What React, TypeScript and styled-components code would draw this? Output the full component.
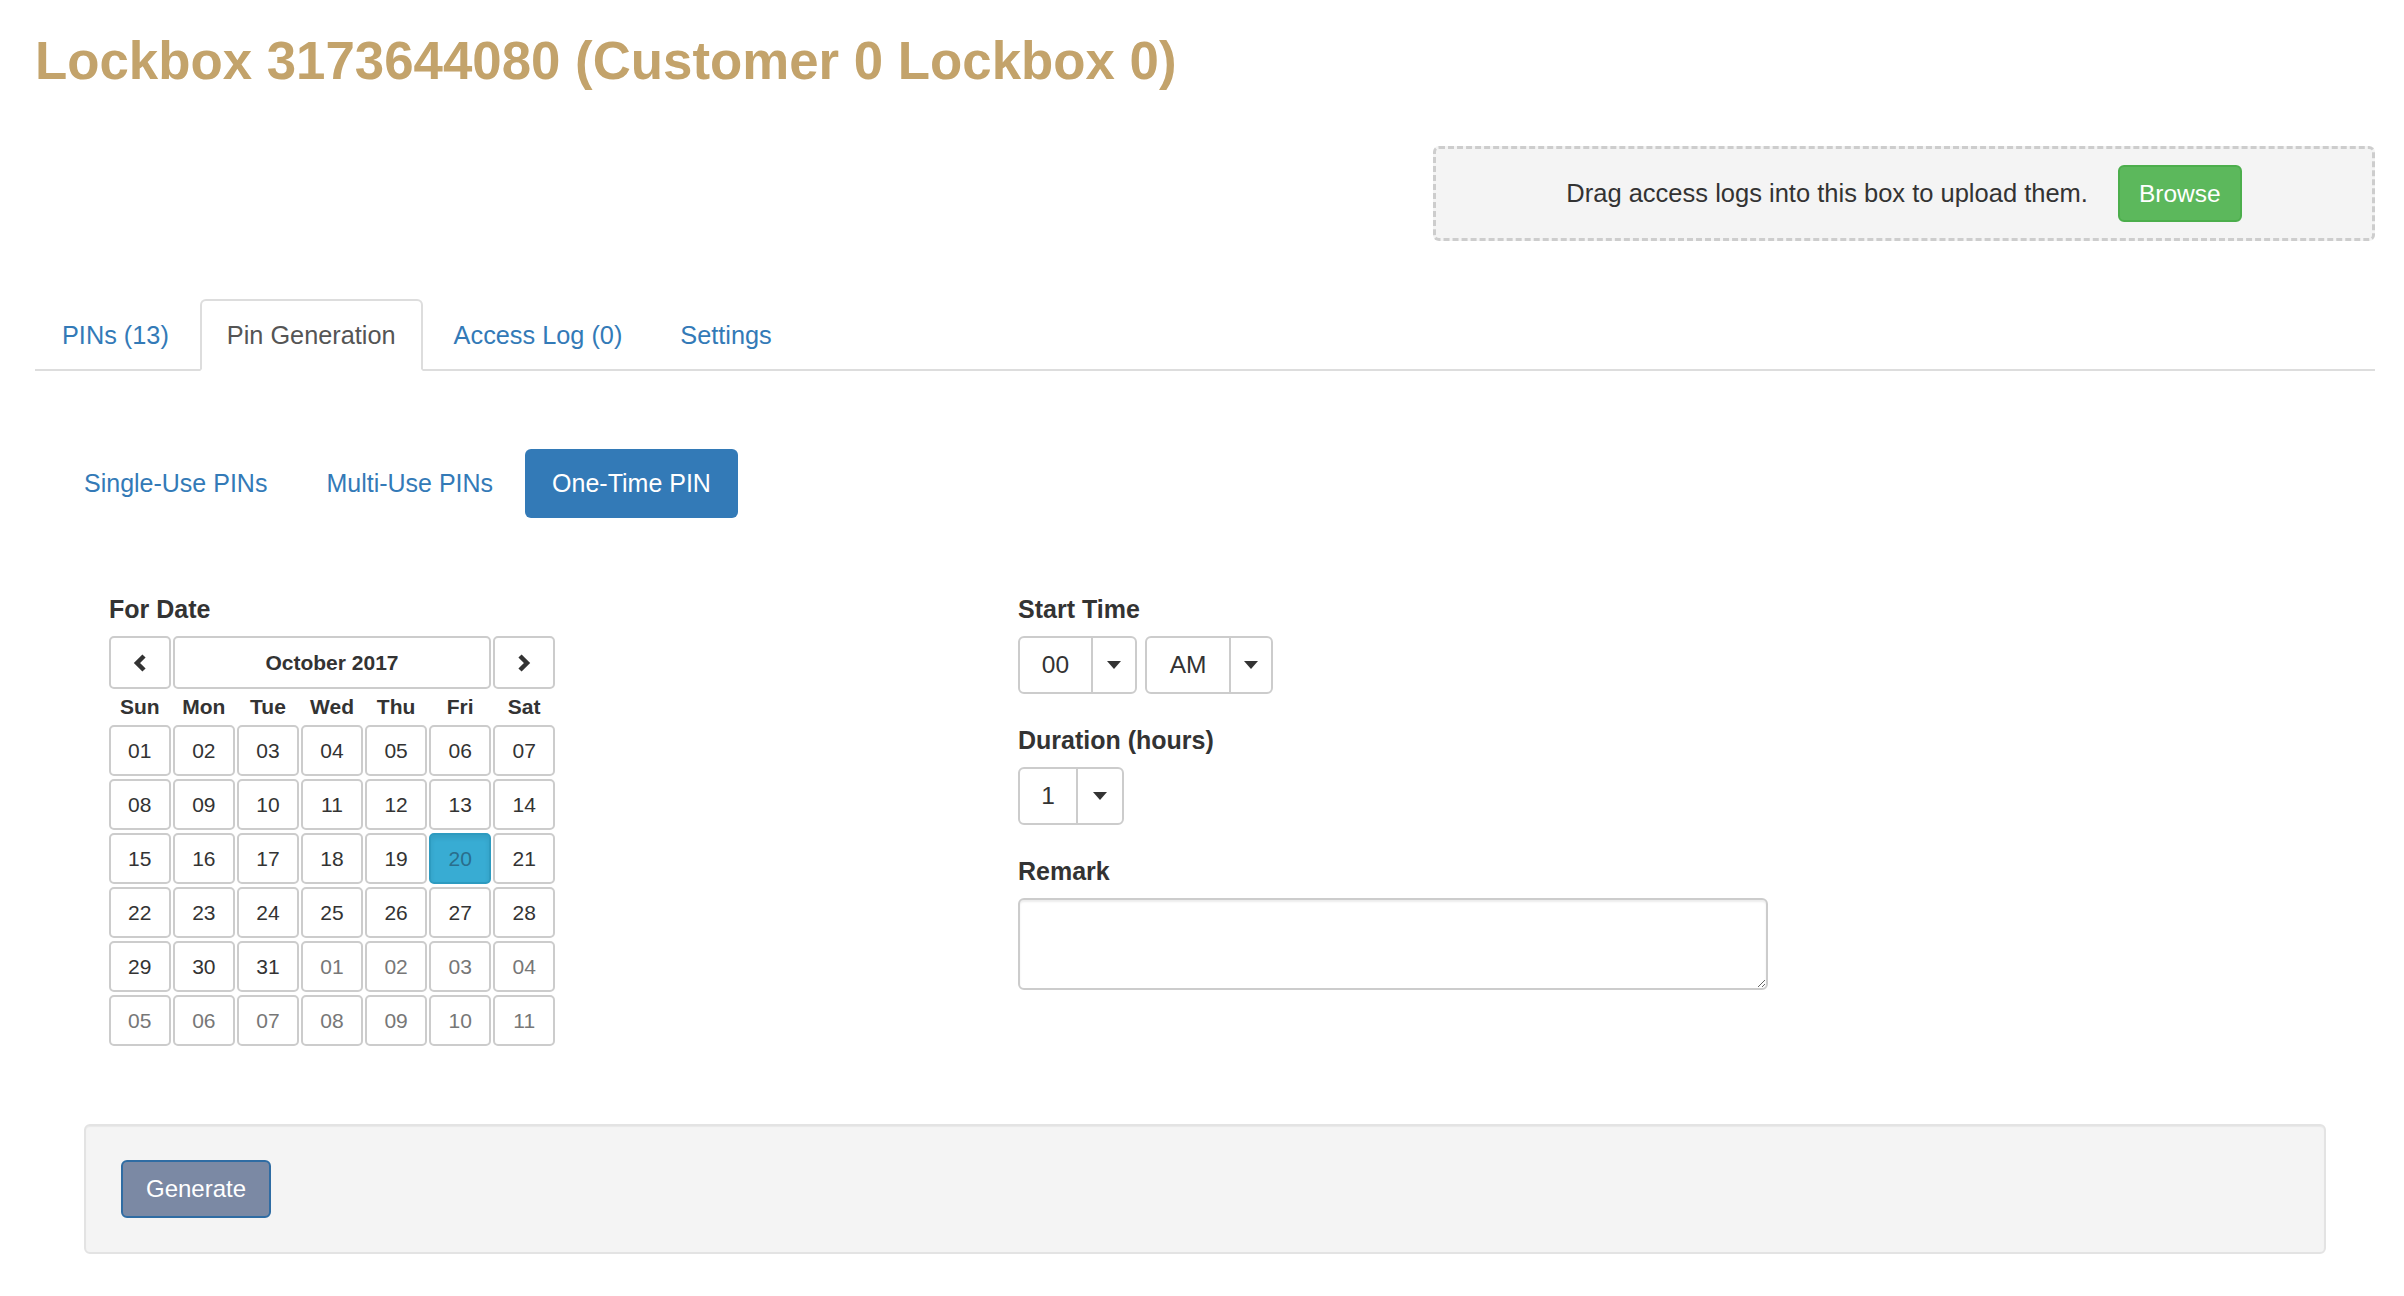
import React from "react";
import styled, { createGlobalStyle } from "styled-components";

const GlobalStyle = createGlobalStyle`
  html, body { margin: 0; padding: 0; background: #fff; }
  body {
    font-family: "Liberation Sans", Arial, Helvetica, sans-serif;
    color: #333;
  }
  * { box-sizing: border-box; }
`;

const Page = styled.div`
  padding: 0 29px 0 35px;
`;

const Title = styled.h1`
  margin: 32px 0 0;
  font-size: 52.8px;
  line-height: 58px;
  font-weight: bold;
  color: #c3a36b;
`;

const UploadRow = styled.div`
  display: flex;
  justify-content: flex-end;
  margin-top: 56px;
`;

const UploadBox = styled.div`
  width: 942px;
  height: 95px;
  border: 3px dashed #cdcdcd;
  border-radius: 6px;
  background: #f4f4f4;
  display: flex;
  align-items: center;
  justify-content: center;
  gap: 30px;
  font-size: 25.5px;
  color: #333;
`;

const BrowseButton = styled.button`
  height: 57px;
  padding: 0 19px;
  font-family: inherit;
  font-size: 24.5px;
  color: #fff;
  background: #5cb85c;
  border: 2px solid #4cae4c;
  border-radius: 6px;
`;

const TabList = styled.div`
  display: flex;
  align-items: flex-end;
  margin-top: 58px;
  border-bottom: 2px solid #ddd;
`;

const Tab = styled.div<{ $active?: boolean }>`
  height: 72px;
  margin-bottom: -2px;
  margin-right: 4px;
  padding: 0 25px;
  display: flex;
  align-items: center;
  font-size: 25.3px;
  color: ${(p) => (p.$active ? "#555" : "#337ab7")};
  background: ${(p) => (p.$active ? "#fff" : "transparent")};
  border: 2px solid ${(p) => (p.$active ? "#ddd" : "transparent")};
  border-bottom-color: transparent;
  border-radius: 6px 6px 0 0;
`;

const TabContent = styled.div`
  padding: 0 21px 0 22px;
`;

const PillRow = styled.div`
  display: flex;
  gap: 5px;
  margin-top: 78px;
`;

const Pill = styled.div<{ $active?: boolean }>`
  height: 69px;
  padding: 0 27px;
  display: flex;
  align-items: center;
  font-size: 25px;
  border-radius: 6px;
  color: ${(p) => (p.$active ? "#fff" : "#337ab7")};
  background: ${(p) => (p.$active ? "#337ab7" : "transparent")};
`;

const FormGrid = styled.div`
  display: grid;
  grid-template-columns: 909px 1fr;
  margin-top: 74px;
  padding-left: 52px;
  align-items: start;
`;

const Column = styled.div`
  display: flex;
  flex-direction: column;
  align-items: flex-start;
`;

const FormGroup = styled.div`
  margin-bottom: 29px;
  &:last-child { margin-bottom: 0; }
`;

const Label = styled.div`
  font-size: 25px;
  font-weight: bold;
  line-height: 34px;
  margin-bottom: 10px;
`;

const Calendar = styled.div`
  width: 446px;
`;

const CalHeader = styled.div`
  display: grid;
  grid-template-columns: 62px 1fr 62px;
  gap: 2px;
  height: 53px;
`;

const CalButton = styled.div`
  display: flex;
  align-items: center;
  justify-content: center;
  border: 2px solid #ccc;
  border-radius: 5px;
  background: #fff;
  font-size: 21px;
  font-weight: bold;
  color: #333;
`;

const DayNames = styled.div`
  display: grid;
  grid-template-columns: repeat(7, 1fr);
  column-gap: 2.5px;
  height: 36px;
  line-height: 36px;
  font-size: 21px;
  font-weight: bold;
  text-align: center;
`;

const DayGrid = styled.div`
  display: grid;
  grid-template-columns: repeat(7, 1fr);
  column-gap: 2.5px;
  row-gap: 3px;
`;

const DayCell = styled.div<{ $muted?: boolean; $active?: boolean }>`
  height: 51px;
  display: flex;
  align-items: center;
  justify-content: center;
  font-size: 21px;
  border-radius: 5px;
  border: 2px solid ${(p) => (p.$active ? "#2d9bc0" : "#ccc")};
  background: ${(p) => (p.$active ? "#38acd3" : "#fff")};
  color: ${(p) => (p.$active ? "#2a6e8c" : p.$muted ? "#777" : "#333")};
  box-shadow: ${(p) => (p.$active ? "inset 0 3px 5px rgba(0,0,0,0.08)" : "none")};
`;

const SelectRow = styled.div`
  display: flex;
  gap: 8px;
`;

const SelectBox = styled.div`
  display: flex;
  height: 58px;
  border: 2px solid #ccc;
  border-radius: 6px;
  background: #fff;
`;

const SelectValue = styled.div<{ $w: number }>`
  width: ${(p) => p.$w}px;
  display: flex;
  align-items: center;
  justify-content: center;
  font-size: 24.5px;
  color: #333;
`;

const SelectCaret = styled.div<{ $w: number }>`
  width: ${(p) => p.$w}px;
  border-left: 2px solid #ccc;
  display: flex;
  align-items: center;
  justify-content: center;
`;

const TextArea = styled.textarea`
  display: block;
  width: 750px;
  height: 92px;
  border: 2px solid #ccc;
  border-radius: 6px;
  box-shadow: inset 0 2px 2px rgba(0, 0, 0, 0.075);
  font-family: inherit;
  font-size: 24px;
  resize: vertical;
  outline: none;
`;

const Panel = styled.div`
  margin: 78px 28px 0 27px;
  padding: 34px 35px;
  background: #f4f4f4;
  border: 2px solid #e3e3e3;
  border-radius: 6px;
  box-shadow: inset 0 1px 1px rgba(0, 0, 0, 0.05);
`;

const GenerateButton = styled.button`
  height: 58px;
  padding: 0 23px;
  font-family: inherit;
  font-size: 24px;
  color: #fff;
  background: #7b89a4;
  border: 2px solid #2f6ca3;
  border-radius: 6px;
`;

const Chevron = ({ dir }: { dir: "left" | "right" }) => (
  <svg width="14" height="18" viewBox="0 0 14 18">
    <polyline
      points={dir === "left" ? "11,2 4,9 11,16" : "3,2 10,9 3,16"}
      fill="none"
      stroke="#333"
      strokeWidth="4.5"
    />
  </svg>
);

const Caret = () => (
  <svg width="14" height="8" viewBox="0 0 14 8">
    <polygon points="0,0 14,0 7,8" fill="#333" />
  </svg>
);

const pad = (n: number) => (n < 10 ? "0" + n : String(n));

const days: { label: string; muted?: boolean; active?: boolean }[] = [];
for (let d = 1; d <= 31; d++) days.push({ label: pad(d), active: d === 20 });
for (let d = 1; d <= 11; d++) days.push({ label: pad(d), muted: true });

const dayNames = ["Sun", "Mon", "Tue", "Wed", "Thu", "Fri", "Sat"];

export default function App() {
  return (
    <>
      <GlobalStyle />
      <Page>
        <Title>Lockbox 3173644080 (Customer 0 Lockbox 0)</Title>
        <UploadRow>
          <UploadBox>
            <span>Drag access logs into this box to upload them.</span>
            <BrowseButton>Browse</BrowseButton>
          </UploadBox>
        </UploadRow>

        <TabList>
          <Tab>PINs (13)</Tab>
          <Tab $active>Pin Generation</Tab>
          <Tab>Access Log (0)</Tab>
          <Tab>Settings</Tab>
        </TabList>

        <TabContent>
          <PillRow>
            <Pill>Single-Use PINs</Pill>
            <Pill>Multi-Use PINs</Pill>
            <Pill $active>One-Time PIN</Pill>
          </PillRow>

          <FormGrid>
            <Column>
              <FormGroup>
                <Label>For Date</Label>
                <Calendar>
                  <CalHeader>
                    <CalButton>
                      <Chevron dir="left" />
                    </CalButton>
                    <CalButton>October 2017</CalButton>
                    <CalButton>
                      <Chevron dir="right" />
                    </CalButton>
                  </CalHeader>
                  <DayNames>
                    {dayNames.map((n) => (
                      <div key={n}>{n}</div>
                    ))}
                  </DayNames>
                  <DayGrid>
                    {days.map((d, i) => (
                      <DayCell key={i} $muted={d.muted} $active={d.active}>
                        {d.label}
                      </DayCell>
                    ))}
                  </DayGrid>
                </Calendar>
              </FormGroup>
            </Column>

            <Column>
              <FormGroup>
                <Label>Start Time</Label>
                <SelectRow>
                  <SelectBox>
                    <SelectValue $w={71}>00</SelectValue>
                    <SelectCaret $w={44}>
                      <Caret />
                    </SelectCaret>
                  </SelectBox>
                  <SelectBox>
                    <SelectValue $w={82}>AM</SelectValue>
                    <SelectCaret $w={42}>
                      <Caret />
                    </SelectCaret>
                  </SelectBox>
                </SelectRow>
              </FormGroup>
              <FormGroup>
                <Label>Duration (hours)</Label>
                <SelectRow>
                  <SelectBox>
                    <SelectValue $w={56}>1</SelectValue>
                    <SelectCaret $w={46}>
                      <Caret />
                    </SelectCaret>
                  </SelectBox>
                </SelectRow>
              </FormGroup>
              <FormGroup>
                <Label>Remark</Label>
                <TextArea />
              </FormGroup>
            </Column>
          </FormGrid>

          <Panel>
            <GenerateButton>Generate</GenerateButton>
          </Panel>
        </TabContent>
      </Page>
    </>
  );
}
